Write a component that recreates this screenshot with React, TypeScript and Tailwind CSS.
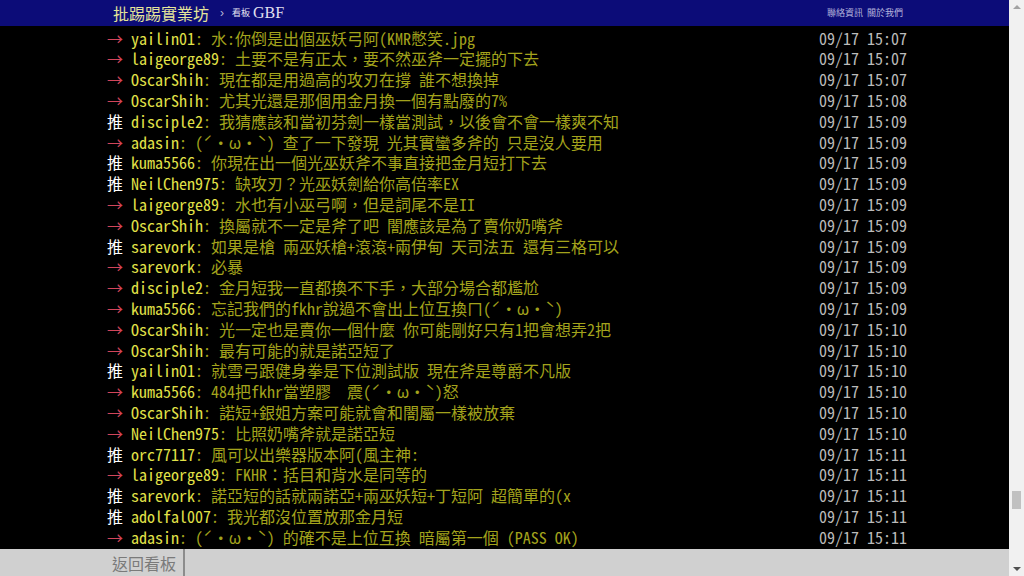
const mono = {
  fontFamily: '"Noto Sans Mono CJK TC", "Noto Sans CJK TC", "Liberation Mono", monospace',
};

type Push = { tag: "推" | "→"; user: string; text: string; time: string };

const pushes: Push[] = [
  { tag: "→", user: "yailin01", text: "水:你倒是出個巫妖弓阿(KMR憋笑.jpg", time: "09/17 15:07" },
  { tag: "→", user: "laigeorge89", text: "土要不是有正太，要不然巫斧一定擺的下去", time: "09/17 15:07" },
  { tag: "→", user: "OscarShih", text: "現在都是用過高的攻刃在撐 誰不想換掉", time: "09/17 15:07" },
  { tag: "→", user: "OscarShih", text: "尤其光還是那個用金月換一個有點廢的7%", time: "09/17 15:08" },
  { tag: "推", user: "disciple2", text: "我猜應該和當初芬劍一樣當測試，以後會不會一樣爽不知", time: "09/17 15:09" },
  { tag: "→", user: "adasin", text: "(ˊ・ω・ˋ) 查了一下發現 光其實蠻多斧的 只是沒人要用", time: "09/17 15:09" },
  { tag: "推", user: "kuma5566", text: "你現在出一個光巫妖斧不事直接把金月短打下去", time: "09/17 15:09" },
  { tag: "推", user: "NeilChen975", text: "缺攻刃？光巫妖劍給你高倍率EX", time: "09/17 15:09" },
  { tag: "→", user: "laigeorge89", text: "水也有小巫弓啊，但是詞尾不是II", time: "09/17 15:09" },
  { tag: "→", user: "OscarShih", text: "換屬就不一定是斧了吧 闇應該是為了賣你奶嘴斧", time: "09/17 15:09" },
  { tag: "推", user: "sarevork", text: "如果是槍 兩巫妖槍+滾滾+兩伊甸 天司法五 還有三格可以", time: "09/17 15:09" },
  { tag: "→", user: "sarevork", text: "必暴", time: "09/17 15:09" },
  { tag: "→", user: "disciple2", text: "金月短我一直都換不下手，大部分場合都尷尬", time: "09/17 15:09" },
  { tag: "→", user: "kuma5566", text: "忘記我們的fkhr說過不會出上位互換ㄇ(ˊ・ω・ˋ)", time: "09/17 15:09" },
  { tag: "→", user: "OscarShih", text: "光一定也是賣你一個什麼 你可能剛好只有1把會想弄2把", time: "09/17 15:10" },
  { tag: "→", user: "OscarShih", text: "最有可能的就是諾亞短了", time: "09/17 15:10" },
  { tag: "推", user: "yailin01", text: "就雪弓跟健身拳是下位測試版 現在斧是尊爵不凡版", time: "09/17 15:10" },
  { tag: "→", user: "kuma5566", text: "484把fkhr當塑膠  震(ˊ・ω・ˋ)怒", time: "09/17 15:10" },
  { tag: "→", user: "OscarShih", text: "諾短+銀姐方案可能就會和闇屬一樣被放棄", time: "09/17 15:10" },
  { tag: "→", user: "NeilChen975", text: "比照奶嘴斧就是諾亞短", time: "09/17 15:10" },
  { tag: "推", user: "orc77117", text: "風可以出樂器版本阿(風主神:", time: "09/17 15:11" },
  { tag: "→", user: "laigeorge89", text: "FKHR：括目和背水是同等的", time: "09/17 15:11" },
  { tag: "推", user: "sarevork", text: "諾亞短的話就兩諾亞+兩巫妖短+丁短阿 超簡單的(x", time: "09/17 15:11" },
  { tag: "推", user: "adolfal007", text: "我光都沒位置放那金月短", time: "09/17 15:11" },
  { tag: "→", user: "adasin", text: "(ˊ・ω・ˋ) 的確不是上位互換 暗屬第一個 (PASS OK)", time: "09/17 15:11" },
];

function PushRow({ p }: { p: Push }) {
  return (
    <div className="flex h-[20.8px] items-center justify-between whitespace-pre text-[16px] leading-[20.8px]" style={mono}>
      <span>
        <span className={p.tag === "推" ? "text-white" : "text-[#d2455a]"}>{p.tag} </span>
        <span className="text-[#e2e248]">{p.user}</span>
        <span className="text-[#a3a31c]">: {p.text}</span>
      </span>
      <span className="text-[#bbbbbb]">{p.time}</span>
    </div>
  );
}

function Scrollbar() {
  return (
    <div className="flex w-[15px] flex-col items-center bg-[#f1f1f1]">
      <div className="mt-[5px] h-0 w-0 border-x-[4px] border-b-[4px] border-x-transparent border-b-[#a3a3a3]" />
      <div className="flex-1" />
      <div className="mb-[58px] h-[18px] w-[9px] bg-[#c1c1c1]" />
      <div className="mb-[5px] h-0 w-0 border-x-[4px] border-t-[4px] border-x-transparent border-t-[#505050]" />
    </div>
  );
}

export default function App() {
  return (
    <div className="flex h-[576px] w-[1024px] overflow-hidden bg-black">
      <div className="flex flex-1 flex-col">
        <header className="flex h-[26px] items-center bg-[#0c0c78]">
          <div className="ml-[113px] flex items-center">
            <span className="text-[16px] leading-none text-[#e4e49a]" style={{ fontFamily: '"Noto Sans CJK TC", serif' }}>
              批踢踢實業坊
            </span>
            <span className="ml-[11px] text-[12px] text-[#b8b8d8]" style={{ fontFamily: '"Liberation Sans", sans-serif' }}>
              ›
            </span>
            <span className="ml-[8px] text-[9px] text-[#e0e0f0]" style={{ fontFamily: '"Noto Sans CJK TC", sans-serif' }}>
              看板
            </span>
            <span className="ml-[3px] text-[16px] text-[#e0e0f0]" style={{ fontFamily: '"Liberation Serif", serif' }}>
              GBF
            </span>
          </div>
          <div className="ml-auto mr-[106px] flex gap-[4px] text-[9px] text-[#b4b4dc]" style={{ fontFamily: '"Noto Sans CJK TC", sans-serif' }}>
            <span>聯絡資訊</span>
            <span>關於我們</span>
          </div>
        </header>

        <main className="flex-1 pt-[1.6px]">
          <div className="ml-[107px] w-[800px]">
            {pushes.map((p, i) => (
              <PushRow key={i} p={p} />
            ))}
          </div>
        </main>

        <footer className="flex h-[27px] bg-[#d0d0d0]">
          <div
            className="ml-[105px] flex w-[80px] items-center justify-center border-r-2 border-[#8c8c8c] text-[16px] text-[#7a7a7a]"
            style={{ fontFamily: '"Noto Sans CJK TC", sans-serif' }}
          >
            返回看板
          </div>
        </footer>
      </div>
      <Scrollbar />
    </div>
  );
}
